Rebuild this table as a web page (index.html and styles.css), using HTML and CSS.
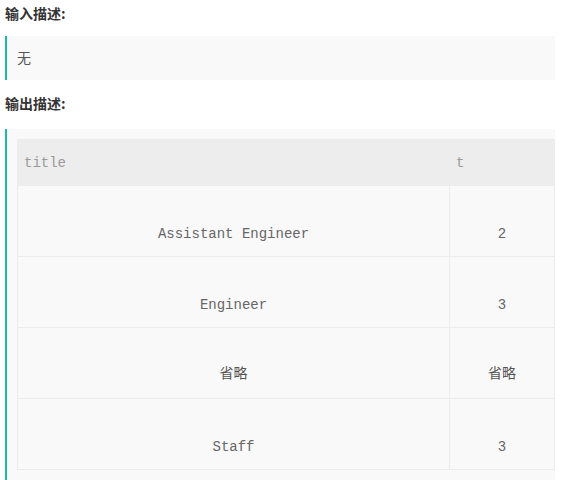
FILE: index.html
```html
<!DOCTYPE html>
<html lang="zh">
<head>
<meta charset="utf-8">
<title>描述</title>
<link rel="stylesheet" href="styles.css">
</head>
<body>
<div class="wrap">
  <h4 class="label">输入描述:</h4>
  <div class="quote quote-in">无</div>
  <h4 class="label label-out">输出描述:</h4>
  <div class="quote quote-out">
    <table class="result">
      <thead>
        <tr><th class="col-title">title</th><th class="col-t">t</th></tr>
      </thead>
      <tbody>
        <tr><td class="mono">Assistant Engineer</td><td class="mono">2</td></tr>
        <tr><td class="mono">Engineer</td><td class="mono">3</td></tr>
        <tr><td class="cjk">省略</td><td class="cjk">省略</td></tr>
        <tr><td class="mono">Staff</td><td class="mono">3</td></tr>
      </tbody>
    </table>
  </div>
</div>
</body>
</html>
```

FILE: styles.css
```css
html, body {
  margin: 0;
  padding: 0;
  background: #fff;
}
body {
  font-family: "Noto Sans CJK SC", "Noto Sans", sans-serif;
  color: #333;
}
.wrap {
  width: 550px;
  padding: 3px 0 0 5px;
}
.label {
  margin: 0;
  font-size: 14px;
  line-height: 20px;
  font-weight: bold;
  color: #333;
}
.label-out {
  margin-top: 13px;
}
.quote {
  border-left: 2px solid #1abc9c;
  background: #f9f9f9;
  padding-left: 10px;
}
.quote-in {
  margin-top: 13px;
  padding-top: 11px;
  padding-bottom: 13px;
  font-size: 14px;
  line-height: 20px;
  color: #555;
}
.quote-out {
  margin-top: 16px;
  padding-top: 10px;
  padding-bottom: 20px;
}
.result {
  border-collapse: collapse;
  width: 538px;
}
.result th, .result td {
  border: 1px solid #ececec;
  line-height: 20px;
}
.result th {
  background: #ededed;
  font-family: "Liberation Mono", monospace;
  font-weight: normal;
  font-size: 14px;
  color: #999;
  text-align: left;
  padding: 13px 6px 12px;
}
.result th.col-t {
  width: 92px;
}
.result td {
  background: #f9f9f9;
  text-align: center;
  padding: 38px 6px 12px;
  font-size: 14px;
}
.result td.mono {
  font-family: "Liberation Mono", monospace;
  color: #666;
}
.result td.cjk {
  font-family: "Noto Sans CJK SC", sans-serif;
  color: #555;
  padding-top: 34px;
  padding-bottom: 16px;
}
```
